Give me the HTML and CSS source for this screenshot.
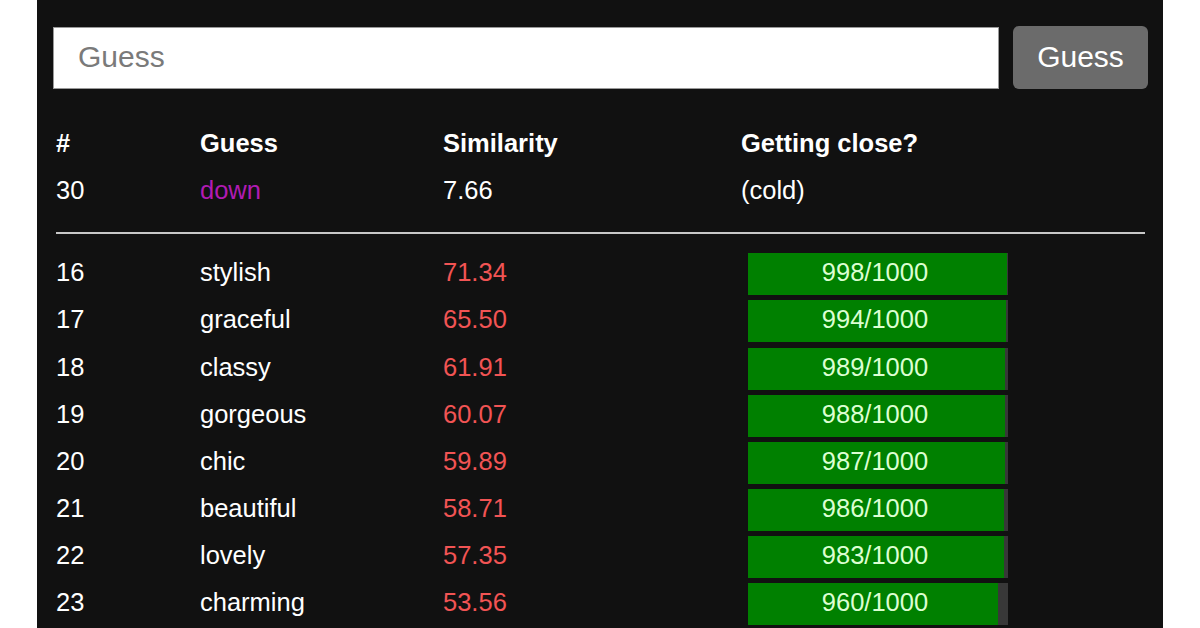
FILE: index.html
```html
<!DOCTYPE html>
<html lang="en">
<head>
    <meta charset="UTF-8">
    <title>Semantle</title>
    <link rel="stylesheet" href="styles.css">
</head>
<body>
    <div class="painel">
        <form class="chute" onsubmit="return false;">
            <input type="text" class="campo" placeholder="Guess">
            <button class="botao">Guess</button>
        </form>

        <div class="tabela">
            <div class="linha cabecalho">
                <span>#</span>
                <span>Guess</span>
                <span>Similarity</span>
                <span>Getting close?</span>
            </div>
            <div class="linha">
                <span>30</span>
                <span class="ultimo">down</span>
                <span>7.66</span>
                <span>(cold)</span>
            </div>

            <hr class="divisor">

            <div class="linha">
                <span>16</span><span>stylish</span><span class="sim">71.34</span>
                <span class="barra"><span class="preenchido" style="width: 99.8%"></span><span class="rotulo">998/1000</span></span>
            </div>
            <div class="linha">
                <span>17</span><span>graceful</span><span class="sim">65.50</span>
                <span class="barra"><span class="preenchido" style="width: 99.4%"></span><span class="rotulo">994/1000</span></span>
            </div>
            <div class="linha">
                <span>18</span><span>classy</span><span class="sim">61.91</span>
                <span class="barra"><span class="preenchido" style="width: 98.9%"></span><span class="rotulo">989/1000</span></span>
            </div>
            <div class="linha">
                <span>19</span><span>gorgeous</span><span class="sim">60.07</span>
                <span class="barra"><span class="preenchido" style="width: 98.8%"></span><span class="rotulo">988/1000</span></span>
            </div>
            <div class="linha">
                <span>20</span><span>chic</span><span class="sim">59.89</span>
                <span class="barra"><span class="preenchido" style="width: 98.7%"></span><span class="rotulo">987/1000</span></span>
            </div>
            <div class="linha">
                <span>21</span><span>beautiful</span><span class="sim">58.71</span>
                <span class="barra"><span class="preenchido" style="width: 98.6%"></span><span class="rotulo">986/1000</span></span>
            </div>
            <div class="linha">
                <span>22</span><span>lovely</span><span class="sim">57.35</span>
                <span class="barra"><span class="preenchido" style="width: 98.3%"></span><span class="rotulo">983/1000</span></span>
            </div>
            <div class="linha">
                <span>23</span><span>charming</span><span class="sim">53.56</span>
                <span class="barra"><span class="preenchido" style="width: 96%"></span><span class="rotulo">960/1000</span></span>
            </div>
        </div>
    </div>
</body>
</html>
```

FILE: styles.css
```css
body {
    margin: 0;
    padding: 0;
    background-color: #fff;
    font-family: "Liberation Sans", Arial, sans-serif;
    overflow: hidden;
}
.painel {
    width: 1126px;
    height: 628px;
    margin-left: 37px;
    background-color: #111;
    color: #fff;
    padding: 26px 15px 0 16px;
    box-sizing: border-box;
}
.chute {
    display: flex;
    gap: 14px;
    margin: 0;
}
.campo {
    flex: 1;
    height: 62px;
    margin-top: 1px;
    box-sizing: border-box;
    border: 1px solid #999;
    padding: 0 24px 2px;
    font-family: inherit;
    font-size: 30px;
    color: #333;
    background: #fff;
}
.campo::placeholder {
    color: #7a7a7a;
}
.botao {
    width: 135px;
    height: 63px;
    border: none;
    border-radius: 6px;
    background-color: #6b6b6b;
    color: #fff;
    font-family: inherit;
    font-size: 30px;
    padding-bottom: 2px;
}
.tabela {
    margin-top: 31px;
    padding: 0 3px;
}
.linha {
    display: grid;
    grid-template-columns: 144px 243px 298px 1fr;
    align-items: center;
    height: 47.15px;
    font-size: 25.5px;
}
.cabecalho {
    font-weight: bold;
}
.ultimo {
    color: #b01bb3;
}
.divisor {
    margin: 18px 0 15px;
    border: none;
    height: 2px;
    background-color: #c8c8c8;
}
.sim {
    color: #f25454;
}
.barra {
    position: relative;
    display: flex;
    width: 260px;
    height: 42px;
    margin-left: 7px;
    margin-top: 3px;
    background-color: #383838;
}
.preenchido {
    background-color: #008000;
    height: 100%;
}
.rotulo {
    position: absolute;
    left: 0;
    right: 0;
    top: 0;
    bottom: 0;
    display: flex;
    align-items: center;
    justify-content: center;
    color: #dcffd2;
    padding: 0 6px 3px 0;
}
```
